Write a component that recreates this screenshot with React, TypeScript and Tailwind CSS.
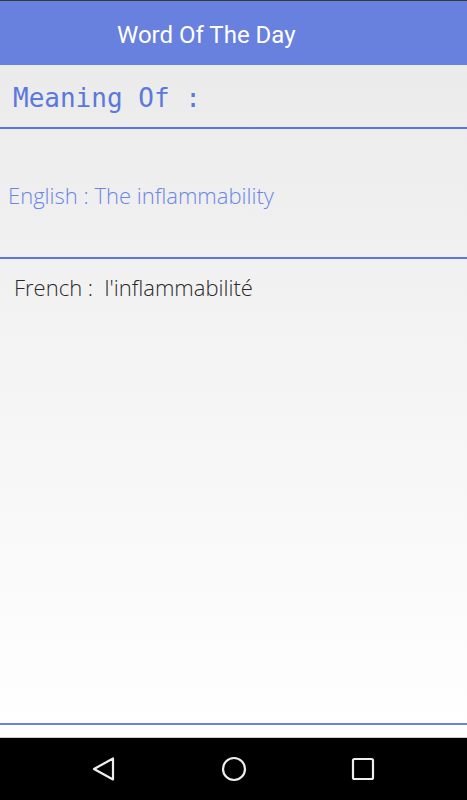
import React from 'react';

export default function App() {
  return (
    <div className="w-[467px] h-[800px] flex flex-col overflow-hidden bg-white" style={{ fontFamily: '"Open Sans", sans-serif' }}>
      <div className="h-[1px] bg-[#3a3a3a]" />
      <header className="h-[64px] bg-[#6880de] flex items-center pl-[117px] shadow-[0_1px_2px_rgba(0,0,0,0.15)]">
        <h1 className="text-white text-[24px] font-['Roboto',sans-serif] pt-[3px]">Word Of The Day</h1>
      </header>
      <div className="flex-1 flex flex-col bg-gradient-to-b from-[#ebebeb] to-[#ffffff]">
        <div className="h-[62px] flex items-center pl-[13px]">
          <span className="text-[26px] text-[#5b78dc] font-['DejaVu_Sans_Mono',monospace] pt-[5px]">Meaning Of :</span>
        </div>
        <div className="h-[2px] bg-[#5b78e0]" />
        <div className="h-[128px] flex items-center pl-[8px]">
          <span className="text-[22px] font-light text-[#6a86e6] pt-[4px]">English : The inflammability</span>
        </div>
        <div className="h-[2px] bg-[#5b78e0]" />
        <div className="flex-1 pl-[14px] pt-[12px]">
          <span className="text-[22px] font-light text-[#2a2a2a] whitespace-pre">French :  l'inflammabilité</span>
        </div>
        <div className="h-[2px] bg-[#6a82e0]" />
        <div className="h-[13px] bg-white border-b border-[#cccccc]" />
      </div>
      <nav className="h-[62px] bg-black flex items-center">
        <div className="w-full flex justify-between items-center pl-[91px] pr-[91px]">
          <svg width="26" height="26" viewBox="0 0 26 26">
            <path d="M22 2.5 L22 23.5 L3 13 Z" fill="none" stroke="#eeeeee" strokeWidth="2.2" strokeLinejoin="round" />
          </svg>
          <svg width="26" height="26" viewBox="0 0 26 26">
            <circle cx="13" cy="13" r="11" fill="none" stroke="#eeeeee" strokeWidth="2.2" />
          </svg>
          <svg width="26" height="26" viewBox="0 0 26 26">
            <rect x="3" y="3" width="20" height="20" rx="1.5" fill="none" stroke="#eeeeee" strokeWidth="2.2" />
          </svg>
        </div>
      </nav>
    </div>
  );
}
